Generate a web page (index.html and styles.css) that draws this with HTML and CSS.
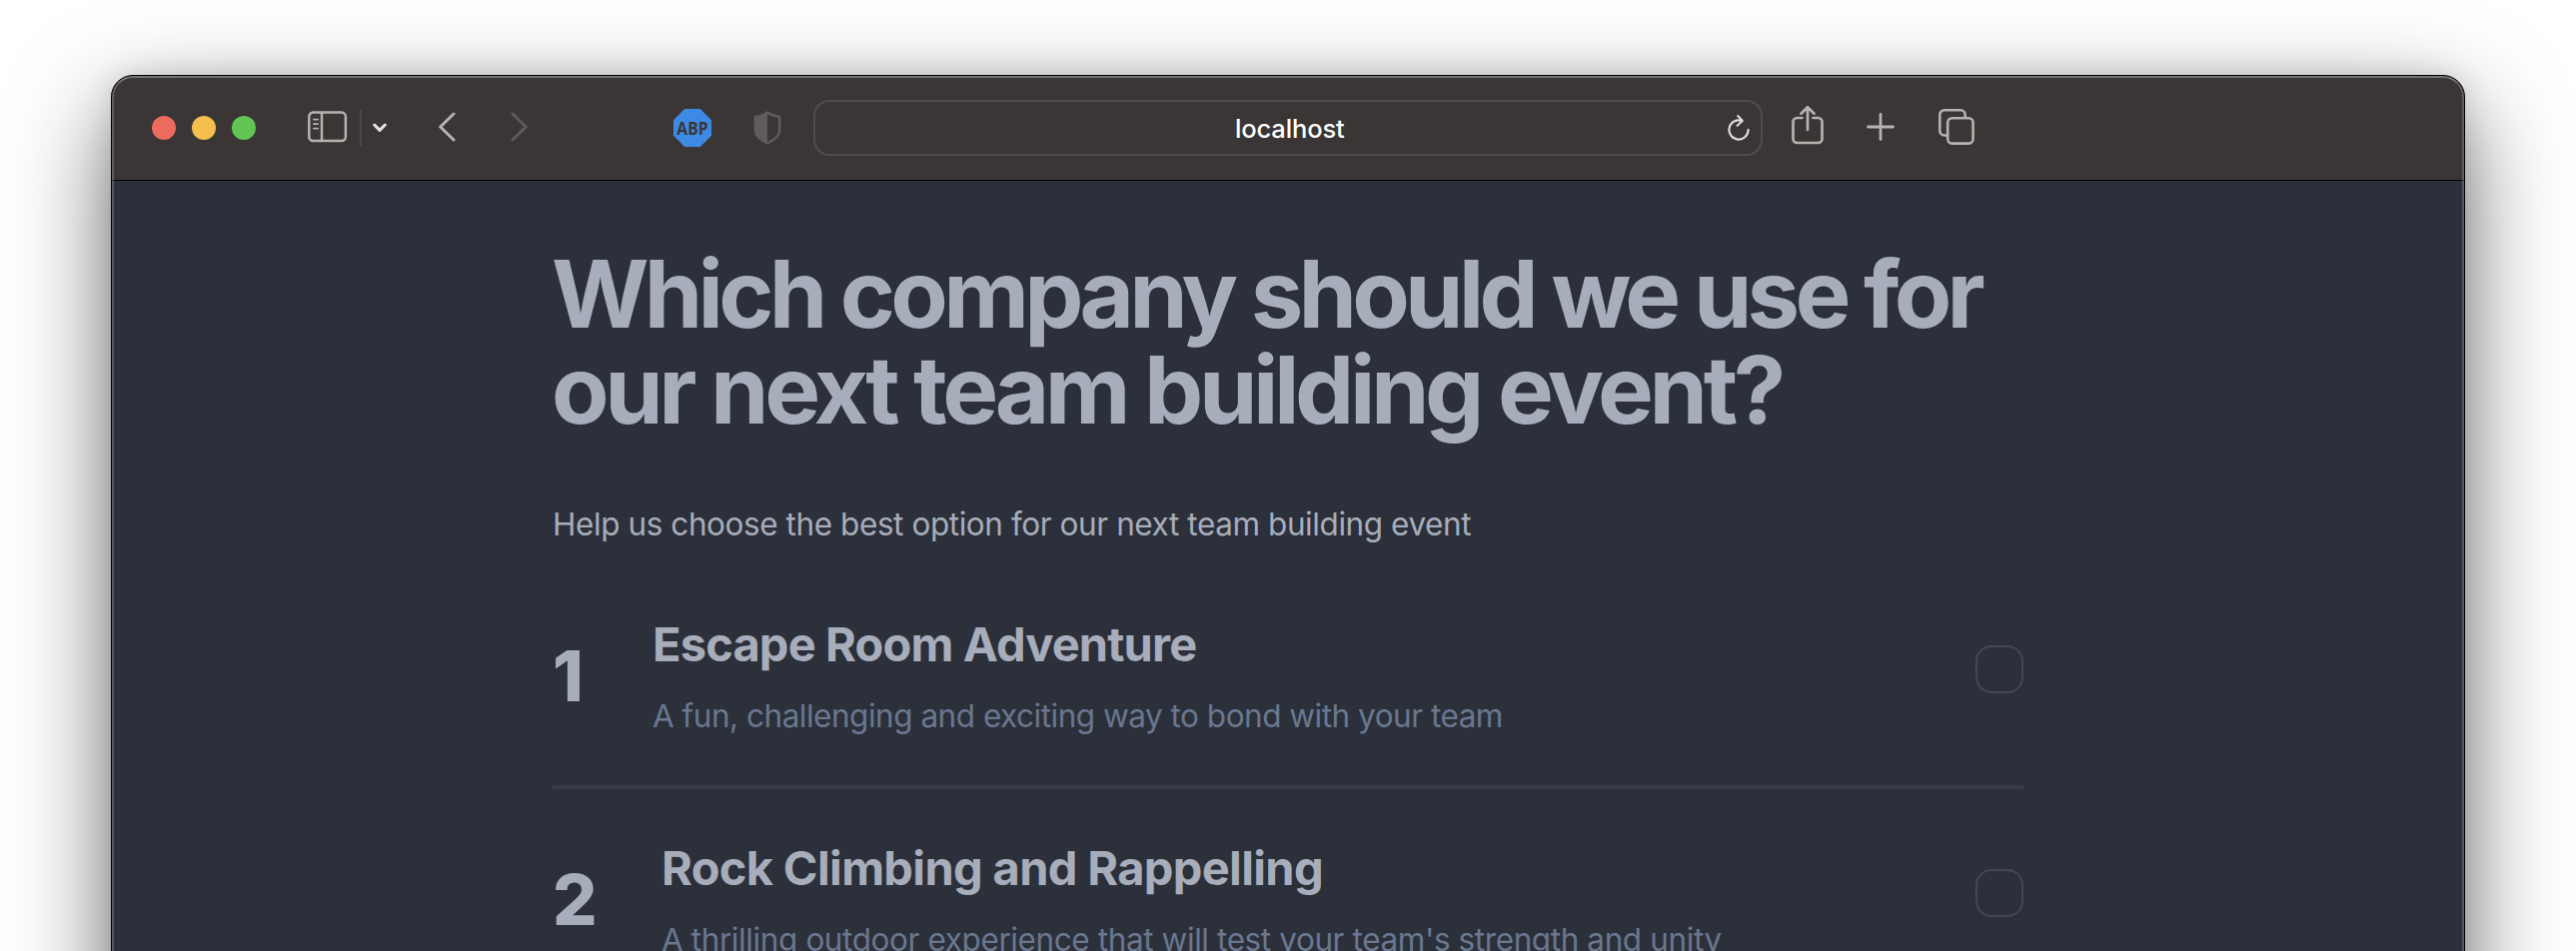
FILE: index.html
```html
<!DOCTYPE html>
<html lang="en">
<head>
<meta charset="utf-8">
<title>localhost</title>
<link rel="stylesheet" href="styles.css">
</head>
<body>
<div class="window">
  <header class="toolbar">
    <div class="lights">
      <span class="light red"></span><span class="light yellow"></span><span class="light green"></span>
    </div>
    <svg class="sidebar" width="40" height="32" viewBox="0 0 40 32" fill="none" stroke="#b7b2b1" stroke-width="2.5" stroke-linecap="round">
      <rect x="1.3" y="1.6" width="36.6" height="28.4" rx="4"/>
      <path d="M14 2v28"/>
      <path stroke-width="1.6" d="M5.8 8.6h4.4M5.8 13.1h4.4M5.8 17.6h4.4"/>
    </svg>
    <span class="separator"></span>
    <svg class="menu-chevron" width="14" height="10" viewBox="0 0 14 10" fill="none" stroke="#e8e3e2" stroke-width="3" stroke-linecap="round" stroke-linejoin="round"><path d="M1.7 2l5.3 5.4L12.3 2"/></svg>
    <svg class="back" width="17" height="30" viewBox="0 0 17 30" fill="none" stroke="#b7b2b1" stroke-width="3" stroke-linecap="round" stroke-linejoin="round"><path d="M15 2L1.7 15 15 28"/></svg>
    <svg class="forward" width="17" height="30" viewBox="0 0 17 30" fill="none" stroke="#5f5b5a" stroke-width="3" stroke-linecap="round" stroke-linejoin="round"><path d="M2 2l13.3 13L2 28"/></svg>
    <div class="abp"><span class="abp-text">ABP</span></div>
    <svg class="shield" width="28" height="34" viewBox="0 0 28 34"><path fill="none" stroke="#5f5b5a" stroke-width="2.5" stroke-linejoin="round" d="M14 1.6C10.5 4 6 5.3 1.8 6v13.5C1.8 26 8 29.5 14 32.3 20 29.5 26.2 26 26.2 19.5V6C22 5.3 17.5 4 14 1.6Z"/><path fill="#5f5b5a" d="M14 1.6C10.5 4 6 5.3 1.8 6v13.5C1.8 26 8 29.5 14 32.3Z"/></svg>
    <div class="address">
      <span class="host">localhost</span>
      <svg class="reload" width="24" height="28" viewBox="0 0 24 28" fill="none" stroke="#e0dcdb" stroke-width="2.1" stroke-linecap="round" stroke-linejoin="round"><path d="M15 6.9A9.6 9.6 0 1 0 21.6 15.8M11.2 2l4.6 4.9-5.2 4.9"/></svg>
    </div>
    <svg class="share" width="32" height="40" viewBox="0 0 32 40" fill="none" stroke="#b7b2b1" stroke-width="2.7" stroke-linecap="round" stroke-linejoin="round"><path d="M10.5 13H5.5a4 4 0 0 0-4 4V34a4 4 0 0 0 4 4h21a4 4 0 0 0 4-4V17a4 4 0 0 0-4-4H21.5M16 25V2.5M9.5 8.7L16 2.2l6.5 6.5"/></svg>
    <svg class="plus" width="28" height="28" viewBox="0 0 28 28" stroke="#b7b2b1" stroke-width="2.8" stroke-linecap="round"><path d="M14 1.5v25M1.5 14h25"/></svg>
    <svg class="tabs" width="36" height="36" viewBox="0 0 36 36" fill="none" stroke="#b7b2b1" stroke-width="2.6" stroke-linecap="round"><rect x="9.2" y="9.2" width="25.4" height="25.4" rx="4.5"/><path d="M8.5 26.5H6a4.7 4.7 0 0 1-4.700-4.700V6A4.7 4.7 0 0 1 6 1.3h16A4.7 4.7 0 0 1 26.7 6v2.5"/></svg>
  </header>
  <main class="page">
    <h1 class="title">Which company should we use for<br><span class="second">our next team building event?</span></h1>
    <p class="lead">Help us choose the best option for our next team building event</p>
    <section class="option">
      <div class="rank one">1</div>
      <div class="info"><h2 class="name n1">Escape Room Adventure</h2><p class="desc d1">A fun, challenging and exciting way to bond with your team</p></div>
      <span class="check"></span>
    </section>
    <section class="option">
      <div class="rank two">2</div>
      <div class="info"><h2 class="name n2">Rock Climbing and Rappelling</h2><p class="desc">A thrilling outdoor experience that will test your team's strength and unity</p></div>
      <span class="check"></span>
    </section>
  </main>
</div>
</body>
</html>
```
FILE: styles.css
```css
* { box-sizing: border-box; }
html { height: 100%; overflow: hidden; }
body {
  margin: 0;
  padding: 75px 111px 0;
  height: 952px;
  overflow: hidden;
  background: #fff;
  font-family: Inter, "Noto Sans", sans-serif;
}
.window {
  position: relative;
  width: 2356px;
  height: 1500px;
  border: 1px solid #000;
  border-radius: 22px;
  background: #2c303a;
  box-shadow: 0 36px 100px rgba(0, 0, 0, .58), 0 0 30px rgba(0, 0, 0, .12);
  overflow: hidden;
}
.window::after {
  content: "";
  position: absolute;
  inset: 0;
  border: 2px solid rgba(255, 255, 255, .2);
  border-top-color: rgba(255, 255, 255, .3);
  border-radius: 21px;
  pointer-events: none;
}
.toolbar {
  display: flex;
  align-items: center;
  height: 105px;
  padding-left: 40px;
  background: #3a3635;
  border-bottom: 1px solid #000;
}
.toolbar > * { flex: none; }
.lights { display: flex; gap: 16px; }
.light { width: 24px; height: 24px; border-radius: 50%; }
.red { background: #ec6a5e; }
.yellow { background: #f4bf4f; }
.green { background: #61c554; }
.sidebar { margin-left: 52px; margin-bottom: 2px; }
.separator { width: 2px; height: 36px; margin-left: 12px; background: #4c4847; }
.menu-chevron { margin-left: 11px; }
.back { margin-left: 52px; margin-bottom: 2px; }
.forward { margin-left: 55px; margin-bottom: 2px; }
.abp {
  display: flex;
  align-items: center;
  justify-content: center;
  width: 38px;
  height: 38px;
  margin-left: 146px;
  background: #3d8ae5;
  clip-path: polygon(29.5% 0, 70.5% 0, 100% 29.5%, 100% 70.5%, 70.5% 100%, 29.5% 100%, 0 70.5%, 0 29.5%);
  color: #3a3635;
  font: 700 18px/1 "Open Sans", sans-serif;
}
.abp-text { transform: scaleX(.87); }
.shield { margin-left: 42px; }
.address {
  display: flex;
  align-items: center;
  justify-content: space-between;
  width: 950px;
  height: 56px;
  margin-left: 32px;
  padding: 1px 10px 0 420px;
  border: 2px solid #514d4c;
  border-radius: 16px;
}
.host { color: #fff; font-size: 25.5px; font-weight: 500; line-height: 30px; letter-spacing: -.15px; }
.reload { margin-bottom: 2px; }
.share { margin: 0 0 6px 29px; }
.plus { margin: 0 0 2px 43px; }
.tabs { margin: 0 0 2px 44px; }
.page { width: 1472px; margin: 65px 0 0 441px; color: #a7adba; }
.title { margin: 0 0 0 -1px; font-size: 94px; line-height: 96px; font-weight: 700; letter-spacing: -4.8px; white-space: nowrap; }
.second { letter-spacing: -4.42px; }
.lead { margin: 62px 0 0; font-size: 31.5px; line-height: 49px; letter-spacing: -.42px; white-space: nowrap; }
.option { display: flex; align-items: flex-start; height: 224px; border-bottom: 4px solid #383c47; }
.lead + .option { margin-top: 17px; }
.rank { flex: none; margin-top: 70px; font-size: 70px; font-weight: 800; line-height: 81px; }
.one { width: 100px; }
.two { width: 109px; }
.info { flex: 1; margin-top: 50px; white-space: nowrap; }
.name { margin: 0; font-size: 47px; line-height: 57px; font-weight: 700; }
.n1 { letter-spacing: -.85px; }
.n2 { letter-spacing: -.66px; }
.desc { margin: 19px 0 0; font-size: 31.5px; line-height: 49px; letter-spacing: -.4px; color: #69778f; }
.d1 { letter-spacing: -.49px; }
.check { flex: none; width: 48px; height: 48px; margin-top: 80px; border: 2px solid #444853; border-radius: 16px; }
```
